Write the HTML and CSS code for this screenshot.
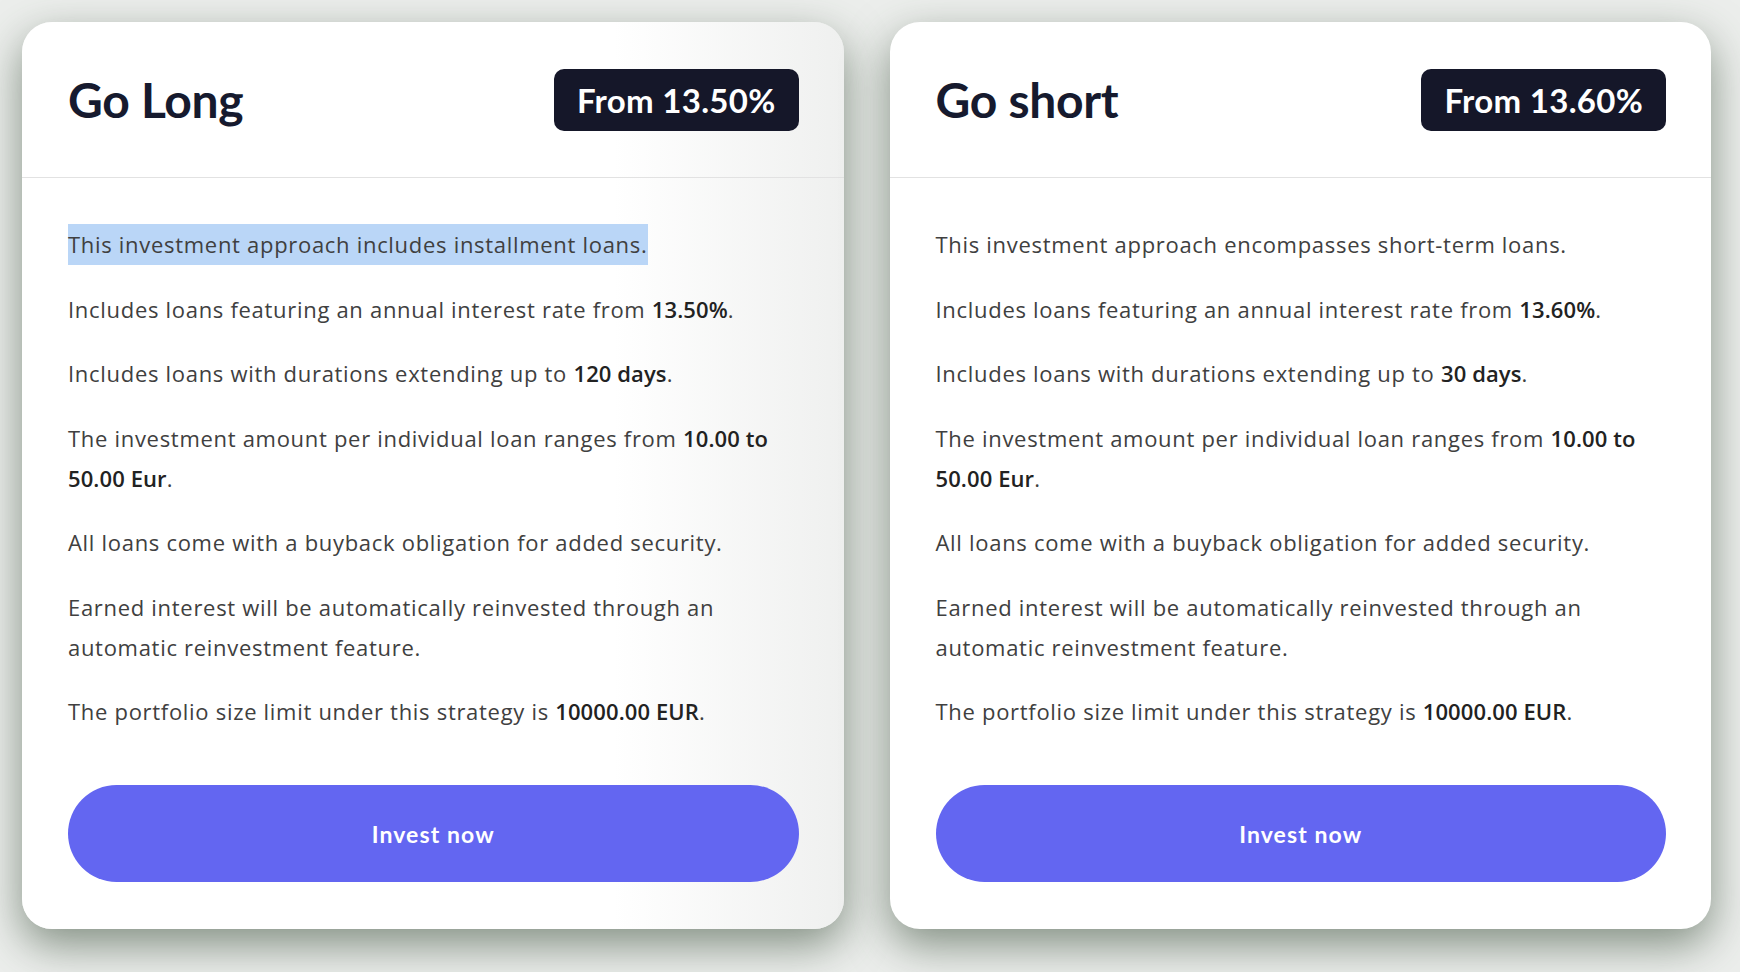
FILE: index.html
```html
<!DOCTYPE html>
<html>
<head>
  <meta charset="UTF-8">
  <title>Investment strategies</title>
  <link rel="stylesheet" href="styles.css">
</head>
<body>

<div class="strategies">

  <div class="card card-long">
    <div class="card-head">
      <h2>Go Long</h2>
      <span class="rate">From 13.50%</span>
    </div>
    <div class="card-body">
      <div class="facts">
        <p><span class="picked">This investment approach includes installment loans.</span></p>
        <p>Includes loans featuring an annual interest rate from <b>13.50%</b>.</p>
        <p>Includes loans with durations extending up to <b>120 days</b>.</p>
        <p>The investment amount per individual loan ranges from <b>10.00 to</b> <b>50.00 Eur</b>.</p>
        <p>All loans come with a buyback obligation for added security.</p>
        <p>Earned interest will be automatically reinvested through an automatic reinvestment feature.</p>
        <p>The portfolio size limit under this strategy is <b>10000.00 EUR</b>.</p>
      </div>
      <button class="invest">Invest now</button>
    </div>
  </div>

  <div class="card">
    <div class="card-head">
      <h2>Go short</h2>
      <span class="rate">From 13.60%</span>
    </div>
    <div class="card-body">
      <div class="facts">
        <p>This investment approach encompasses short-term loans.</p>
        <p>Includes loans featuring an annual interest rate from <b>13.60%</b>.</p>
        <p>Includes loans with durations extending up to <b>30 days</b>.</p>
        <p>The investment amount per individual loan ranges from <b>10.00 to</b> <b>50.00 Eur</b>.</p>
        <p>All loans come with a buyback obligation for added security.</p>
        <p>Earned interest will be automatically reinvested through an automatic reinvestment feature.</p>
        <p>The portfolio size limit under this strategy is <b>10000.00 EUR</b>.</p>
      </div>
      <button class="invest">Invest now</button>
    </div>
  </div>

</div>

</body>
</html>
```

FILE: styles.css
```css
body {
  font-family: Lato, "Liberation Sans", sans-serif;
  margin: 0;
  padding: 0;
  background-color: #eceeec;
  height: 972px;
  overflow: hidden;
}
.strategies {
  display: flex;
  gap: 46px;
  padding: 22px 29px 0 22px;
}
.card {
  flex: 1;
  background-color: #fff;
  border-radius: 30px;
  box-shadow: 0 16px 44px rgba(60, 80, 60, 0.6);
}
.card-long {
  background: linear-gradient(to right, #fff 72%, #eff0ef);
}
.card-head {
  height: 155px;
  display: flex;
  align-items: center;
  justify-content: space-between;
  padding: 0 45px 0 46px;
  border-bottom: 1px solid #e2e2e2;
}
.card-head h2 {
  margin: 0;
  font-size: 48px;
  font-weight: 700;
  color: #161a2e;
  letter-spacing: -0.3px;
}
.rate {
  background-color: #151729;
  color: #fff;
  font-size: 33px;
  font-weight: 700;
  padding: 12px 23px;
  border-radius: 10px;
  line-height: 38px;
  letter-spacing: 0.3px;
}
.card-body {
  padding: 46px 45px 47px 46px;
}
.facts {
  margin-bottom: 54px;
}
.facts p {
  margin: 0 0 24.5px;
  font-family: "Open Sans", Lato, sans-serif;
  font-size: 22px;
  line-height: 40px;
  color: #404040;
  letter-spacing: 0.7px;
}
.facts p:last-child {
  margin-bottom: 0;
}
.facts b {
  font-weight: 600;
  color: #222;
  letter-spacing: 0.1px;
}
.picked {
  background-color: #bad6f7;
  padding: 5px 1px 6px 0;
}
.invest {
  display: block;
  width: 100%;
  height: 97px;
  border: none;
  border-radius: 50px;
  background-color: #6366f1;
  color: #fff;
  font-family: Lato, "Liberation Sans", sans-serif;
  font-size: 23px;
  font-weight: 700;
  letter-spacing: 1.1px;
  cursor: pointer;
}
```
